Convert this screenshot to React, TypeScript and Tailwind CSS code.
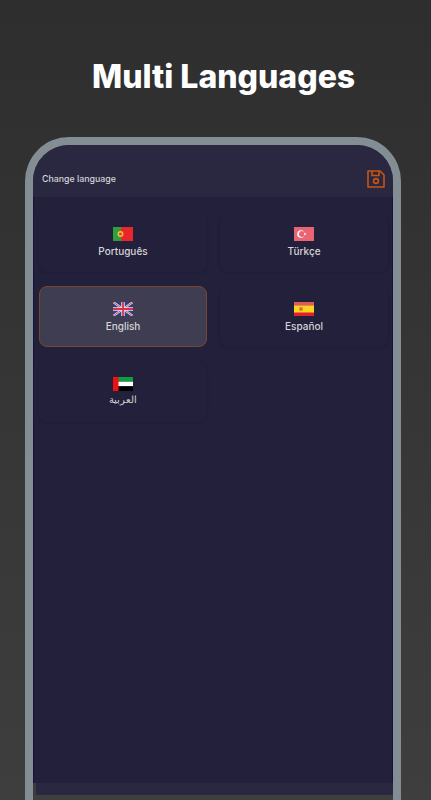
const Portugal = () => (
  <svg width="20" height="14" viewBox="0 0 20 14" className="block">
    <rect width="20" height="14" fill="#e8262b" />
    <rect width="8" height="14" fill="#2f9e3f" />
    <circle cx="7.5" cy="7" r="3" fill="#f2c230" />
    <circle cx="7.5" cy="7" r="1.6" fill="#d9483b" />
  </svg>
)

const Turkey = () => (
  <svg width="20" height="14" viewBox="0 0 20 14" className="block">
    <rect width="20" height="14" fill="#ea6474" />
    <circle cx="7" cy="7" r="3.8" fill="#fff" />
    <circle cx="8" cy="7" r="3" fill="#ea6474" />
    <circle cx="11" cy="7" r="0.9" fill="#fff" />
  </svg>
)

const UK = () => (
  <svg width="20" height="14" viewBox="0 0 20 14" className="block">
    <rect width="20" height="14" fill="#2c3f85" />
    <path d="M0 0L20 14M20 0L0 14" stroke="#e6e6ee" strokeWidth="2.2" />
    <path d="M0 0L20 14M20 0L0 14" stroke="#d8324a" strokeWidth="0.9" />
    <path d="M10 0V14M0 7H20" stroke="#e6e6ee" strokeWidth="3.4" />
    <path d="M10 0V14M0 7H20" stroke="#d8324a" strokeWidth="1.8" />
  </svg>
)

const Spain = () => (
  <svg width="20" height="14" viewBox="0 0 20 14" className="block">
    <rect width="20" height="14" fill="#e0202a" />
    <rect y="0" width="20" height="3.5" fill="#dd5b5b" />
    <rect y="3.5" width="20" height="7" fill="#f8d521" />
    <circle cx="7" cy="7" r="2" fill="#d9713a" />
  </svg>
)

const Emirates = () => (
  <svg width="20" height="14" viewBox="0 0 20 14" className="block">
    <rect width="20" height="4.7" fill="#0f9d3f" />
    <rect y="4.7" width="20" height="4.6" fill="#fff" />
    <rect y="9.3" width="20" height="4.7" fill="#000" />
    <rect width="5.5" height="14" fill="#f01010" />
  </svg>
)

const SaveIcon = () => (
  <svg width="18" height="18" viewBox="0 0 18 18" fill="none" stroke="#c9540f" strokeWidth="1.6" className="block">
    <path d="M1 1H13L17 5V17H1Z" strokeLinejoin="round" />
    <path d="M5 1V5.5H12V1" />
    <circle cx="9" cy="11" r="2.4" />
  </svg>
)

const languages = [
  { name: 'Português', flag: <Portugal /> },
  { name: 'Türkçe', flag: <Turkey /> },
  { name: 'English', flag: <UK />, active: true },
  { name: 'Español', flag: <Spain /> },
  { name: 'العربية', flag: <Emirates />, small: true },
]

export default function App() {
  return (
    <div className="flex h-[800px] w-[431px] flex-col overflow-hidden bg-gradient-to-b from-[#2e2e2e] to-[#3e3e3e] font-['Inter',sans-serif]">
      <h1 className="mt-[58px] ml-[92px] h-[42px] text-[32px] leading-[38px] font-extrabold whitespace-nowrap text-white">Multi Languages</h1>

      <div className="mt-[37px] ml-[25px] flex min-h-0 w-[376px] flex-1 flex-col rounded-t-[44px] border-x-8 border-t-8 border-[#838d94]">
        <div className="flex h-[52px] shrink-0 items-center justify-between rounded-t-[36px] bg-[#2a2840] pt-[16px] pr-[8px] pl-[9px]">
          <span className="text-[8.8px] font-medium text-[#d4d4d8]">Change language</span>
          <SaveIcon />
        </div>

        <div className="flex-1 border-x border-[#16143a] bg-[#22203a] px-[5px] pt-[14px]">
          <div className="grid grid-cols-[168px_168px] gap-x-[13px] gap-y-[14px]">
            {languages.map((lang) => (
              <div
                key={lang.name}
                className={
                  lang.active
                    ? 'flex h-[61px] flex-col items-center justify-center gap-[3px] rounded-[8px] border border-[#78462f] bg-[#3f3d52] pt-[1px]'
                    : 'flex h-[61px] flex-col items-center justify-center gap-[3px] rounded-[8px] bg-[#22203a] pt-[1px] shadow-[0_1px_3px_rgba(0,0,0,0.1)]'
                }
              >
                {lang.flag}
                <span
                  className={
                    lang.small
                      ? "mb-[2px] font-['Noto_Sans',sans-serif] text-[9.5px] leading-[12px] font-medium text-[#d4d4d8]"
                      : 'text-[10px] leading-[14px] font-medium text-[#d4d4d8]'
                  }
                >
                  {lang.name}
                </span>
              </div>
            ))}
          </div>
        </div>

        <div className="mb-[5px] h-[12px] shrink-0 border-l-[3px] border-[#3a3a40] bg-[#2a2840]" />
      </div>
    </div>
  )
}
